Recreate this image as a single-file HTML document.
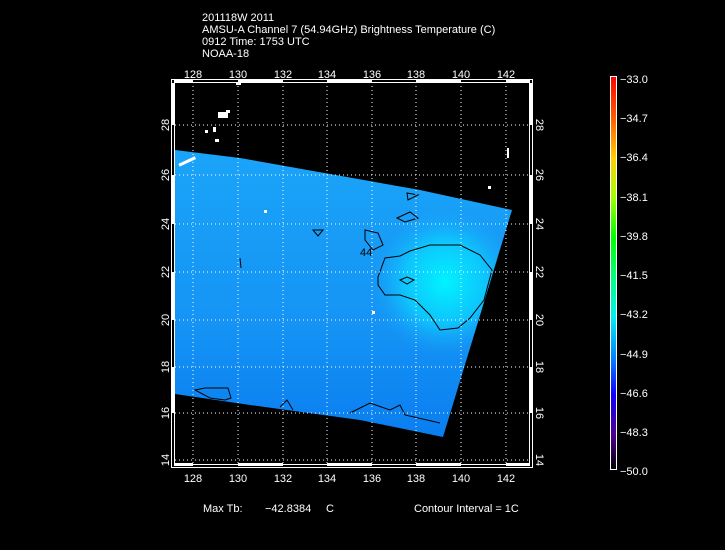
<!DOCTYPE html>
<html><head><style>
html,body{margin:0;padding:0;background:#000;width:725px;height:550px;overflow:hidden}
svg{display:block}
text{font-family:"Liberation Sans",sans-serif;fill:#fff;font-size:11px}
</style></head><body>
<svg width="725" height="550" viewBox="0 0 725 550">
<defs>
<radialGradient id="hot" cx="445" cy="282" r="75" gradientUnits="userSpaceOnUse">
<stop offset="0" stop-color="#00f4ff"/><stop offset="0.55" stop-color="#0cd0ff" stop-opacity="0.8"/><stop offset="1" stop-color="#18a0f8" stop-opacity="0"/>
</radialGradient>
<linearGradient id="base" x1="0" y1="150" x2="0" y2="437" gradientUnits="userSpaceOnUse">
<stop offset="0" stop-color="#1aa4f8"/><stop offset="0.6" stop-color="#1594f5"/><stop offset="1" stop-color="#0a7ef0"/>
</linearGradient>
<linearGradient id="cb" x1="0" y1="470" x2="0" y2="76" gradientUnits="userSpaceOnUse">
<stop offset="0" stop-color="#000"/><stop offset="0.09" stop-color="#500090"/><stop offset="0.19" stop-color="#1000ff"/><stop offset="0.28" stop-color="#0080ff"/><stop offset="0.39" stop-color="#00f0f0"/><stop offset="0.49" stop-color="#00ff80"/><stop offset="0.59" stop-color="#00ff00"/><stop offset="0.69" stop-color="#a0ff00"/><stop offset="0.79" stop-color="#ffd000"/><stop offset="0.89" stop-color="#ff6000"/><stop offset="1" stop-color="#ff0000"/>
</linearGradient>
</defs>
<text x="202" y="21">201118W 2011</text>
<text x="202" y="33">AMSU-A Channel 7 (54.94GHz) Brightness Temperature (C)</text>
<text x="202" y="45">0912 Time: 1753 UTC</text>
<text x="202" y="57">NOAA-18</text>

<path d="M175,150 L240,158 L330,174 L420,190 L512,210 L443,437 L360,420 L250,405 L175,394 Z" fill="url(#base)"/>
<path d="M175,150 L240,158 L330,174 L420,190 L512,210 L443,437 L360,420 L250,405 L175,394 Z" fill="url(#hot)"/>
<g fill="none" stroke="#000" stroke-width="1">
<path d="M378,277 L385,258 L400,256 L410,251 L430,245 L460,245 L480,255 L492,270 L484,300 L470,318 L458,328 L440,330 L430,315 L415,300 L400,295 L385,295 L378,285 Z"/>
<path d="M400,280 L407,277 L414,280 L407,284 Z"/>
<path d="M365,230 L378,233 L383,245 L373,250 L365,240 Z"/>
<path d="M397,218 L410,212 L418,218 L405,222 Z"/>
<path d="M407,193 L418,195 L408,200 Z"/>
<path d="M313,230 L323,230 L318,236 Z"/>
<path d="M195,390 L205,388 L228,388 L231,398 L225,400 L210,398 Z"/>
<path d="M280,407 L287,400 L293,410"/>
<path d="M350,413 L370,403 L390,410 L400,405 L405,415 L440,423"/>
<path d="M240,258 L241,268"/>
</g>
<text x="360" y="256" font-size="9" style="fill:#000">44</text>
<g fill="#fff">
<rect x="218" y="112" width="10" height="6"/><rect x="226" y="110" width="4" height="3"/>
<rect x="213" y="127" width="3" height="5"/><rect x="215" y="139" width="4" height="3"/>
<rect x="178" y="160" width="18" height="3" transform="rotate(-25 187 161)"/>
<rect x="205" y="130" width="3" height="3"/><rect x="264" y="210" width="3" height="3"/>
<rect x="236" y="82" width="5" height="3"/><rect x="372" y="311" width="3" height="3"/>
<rect x="488" y="186" width="3" height="3"/><rect x="507" y="148" width="2" height="10"/>
</g>
<g stroke="#fff" stroke-width="1" stroke-dasharray="1,3">
<line x1="193" y1="82" x2="193" y2="465"/><line x1="238" y1="82" x2="238" y2="465"/>
<line x1="283" y1="82" x2="283" y2="465"/><line x1="327" y1="82" x2="327" y2="465"/>
<line x1="372" y1="82" x2="372" y2="465"/><line x1="416" y1="82" x2="416" y2="465"/>
<line x1="461" y1="82" x2="461" y2="465"/><line x1="506" y1="82" x2="506" y2="465"/>
<line x1="175" y1="125" x2="530" y2="125"/><line x1="175" y1="175" x2="530" y2="175"/>
<line x1="175" y1="224" x2="530" y2="224"/><line x1="175" y1="272" x2="530" y2="272"/>
<line x1="175" y1="320" x2="530" y2="320"/><line x1="175" y1="367" x2="530" y2="367"/>
<line x1="175" y1="413" x2="530" y2="413"/><line x1="175" y1="460" x2="530" y2="460"/>
</g>
<rect x="171.5" y="79.5" width="361" height="388" fill="none" stroke="#fff"/>
<rect x="174.5" y="82.5" width="355" height="382" fill="none" stroke="#fff"/>
<g fill="#fff">
<rect x="174" y="80" width="19" height="3"/><rect x="238" y="80" width="45" height="3"/><rect x="327" y="80" width="45" height="3"/><rect x="416" y="80" width="45" height="3"/><rect x="506" y="80" width="24" height="3"/>
<rect x="174" y="463" width="19" height="3"/><rect x="238" y="463" width="45" height="3"/><rect x="327" y="463" width="45" height="3"/><rect x="416" y="463" width="45" height="3"/><rect x="506" y="463" width="24" height="3"/>
<rect x="172" y="83" width="3" height="42"/><rect x="172" y="175" width="3" height="49"/><rect x="172" y="272" width="3" height="48"/><rect x="172" y="367" width="3" height="46"/>
<rect x="529" y="83" width="3" height="42"/><rect x="529" y="175" width="3" height="49"/><rect x="529" y="272" width="3" height="48"/><rect x="529" y="367" width="3" height="46"/>
</g>
<g text-anchor="middle">
<text x="193" y="78">128</text><text x="238" y="78">130</text><text x="283" y="78">132</text><text x="327" y="78">134</text><text x="372" y="78">136</text><text x="416" y="78">138</text><text x="461" y="78">140</text><text x="506" y="78">142</text>
<text x="193" y="482">128</text><text x="238" y="482">130</text><text x="283" y="482">132</text><text x="327" y="482">134</text><text x="372" y="482">136</text><text x="416" y="482">138</text><text x="461" y="482">140</text><text x="506" y="482">142</text>
</g>
<g text-anchor="middle">
<text transform="translate(169,125) rotate(-90)">28</text><text transform="translate(169,175) rotate(-90)">26</text><text transform="translate(169,224) rotate(-90)">24</text><text transform="translate(169,272) rotate(-90)">22</text><text transform="translate(169,320) rotate(-90)">20</text><text transform="translate(169,367) rotate(-90)">18</text><text transform="translate(169,413) rotate(-90)">16</text><text transform="translate(169,460) rotate(-90)">14</text>
<text transform="translate(536,125) rotate(90)">28</text><text transform="translate(536,175) rotate(90)">26</text><text transform="translate(536,224) rotate(90)">24</text><text transform="translate(536,272) rotate(90)">22</text><text transform="translate(536,320) rotate(90)">20</text><text transform="translate(536,367) rotate(90)">18</text><text transform="translate(536,413) rotate(90)">16</text><text transform="translate(536,460) rotate(90)">14</text>
</g>
<rect x="610.5" y="76.5" width="6" height="393" fill="url(#cb)" stroke="#fff"/>
<g>
<text x="620" y="83">−33.0</text><text x="620" y="122">−34.7</text><text x="620" y="161">−36.4</text><text x="620" y="201">−38.1</text><text x="620" y="240">−39.8</text><text x="620" y="279">−41.5</text><text x="620" y="318">−43.2</text><text x="620" y="358">−44.9</text><text x="620" y="397">−46.6</text><text x="620" y="436">−48.3</text><text x="620" y="475">−50.0</text>
</g>
<text x="203" y="512">Max Tb:</text>
<text x="265" y="512">−42.8384</text>
<text x="326" y="512">C</text>
<text x="414" y="512">Contour Interval = 1C</text>
</svg>
</body></html>
